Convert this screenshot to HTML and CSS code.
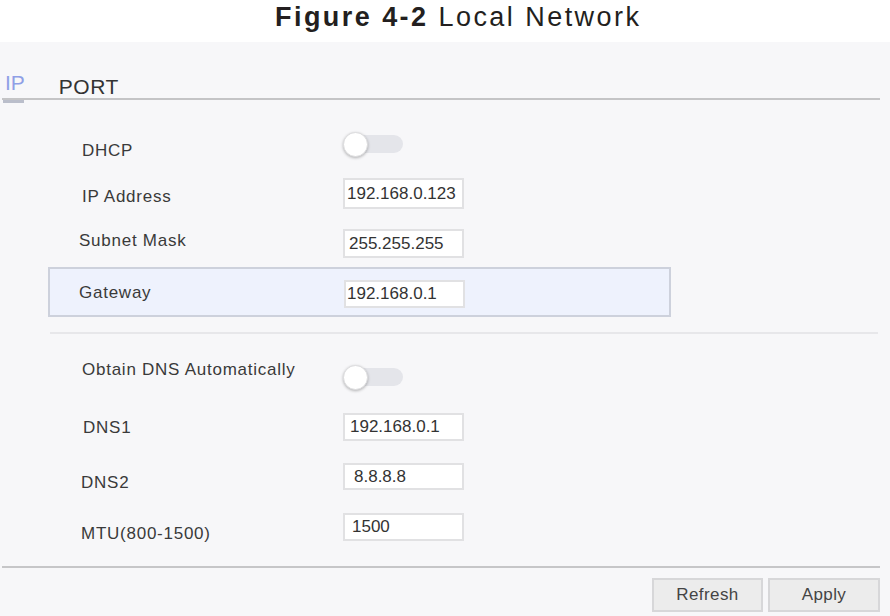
FILE: index.html
```html
<!DOCTYPE html>
<html lang="en">
<head>
<meta charset="utf-8">
<title>Local Network</title>
<link rel="stylesheet" href="styles.css">
</head>
<body>
<div class="page">
  <header class="title"><b>Figure 4-2</b> Local Network</header>
  <main class="panel">
    <nav class="tabs">
      <span class="tab tab-active">IP</span>
      <span class="tab tab-port">PORT</span>
    </nav>
    <section class="form">
      <div class="row r-dhcp">
        <span class="label">DHCP</span>
        <span class="toggle"><span class="knob"></span></span>
      </div>
      <div class="row r-ip">
        <span class="label">IP Address</span>
        <input class="field pad-ip" type="text" value="192.168.0.123">
      </div>
      <div class="row r-mask">
        <span class="label in-79">Subnet Mask</span>
        <input class="field pad-mask" type="text" value="255.255.255">
      </div>
      <div class="gateway">
        <span class="label">Gateway</span>
        <input class="field pad-gw" type="text" value="192.168.0.1">
      </div>
      <div class="sep"></div>
      <div class="row r-obtain">
        <span class="label">Obtain DNS Automatically</span>
        <span class="toggle"><span class="knob"></span></span>
      </div>
      <div class="row r-dns1">
        <span class="label in-83">DNS1</span>
        <input class="field pad-dns1" type="text" value="192.168.0.1">
      </div>
      <div class="row r-dns2">
        <span class="label in-81">DNS2</span>
        <input class="field pad-dns2" type="text" value="8.8.8.8">
      </div>
      <div class="row r-mtu">
        <span class="label in-81">MTU(800-1500)</span>
        <input class="field pad-mtu" type="text" value="1500">
      </div>
    </section>
    <div class="footer-line"></div>
    <div class="actions">
      <button class="btn btn-refresh" type="button">Refresh</button>
      <button class="btn btn-apply" type="button">Apply</button>
    </div>
  </main>
</div>
</body>
</html>
```
FILE: styles.css
```css
* { box-sizing: border-box; }
html, body { margin: 0; padding: 0; }
body {
  width: 890px;
  height: 616px;
  overflow: hidden;
  background: #f7f7f9;
  font-family: "Liberation Sans", Arial, sans-serif;
  color: #3a3a3a;
}
.page { display: flex; flex-direction: column; height: 616px; }

.title {
  height: 42px;
  background: #ffffff;
  padding-left: 275px;
  font-size: 27px;
  line-height: 34px;
  letter-spacing: 2.45px;
  color: #231f20;
  white-space: nowrap;
}
.title b { font-weight: 700; }

.panel { flex: 1; background: #f7f7f9; display: flex; flex-direction: column; }

.tabs {
  display: flex;
  align-items: flex-start;
  height: 58px;
  margin: 0 10px 0 2px;
  padding-left: 3px;
  border-bottom: 2px solid #c4c4c6;
}
.tab { font-size: 21px; line-height: 24px; }
.tab-active {
  position: relative;
  margin-top: 29px;
  color: #8f9fe6;
}
.tab-active::after {
  content: "";
  position: absolute;
  left: -2px;
  top: 29px;
  width: 21px;
  height: 3px;
  background: #babecb;
}
.tab-port { margin-top: 33px; margin-left: 34px; color: #333333; letter-spacing: 0.5px; }

.form { display: flex; flex-direction: column; }

.row {
  display: grid;
  grid-template-columns: 343px 121px;
  align-items: start;
}
.label {
  font-size: 17px;
  line-height: 20px;
  letter-spacing: 0.75px;
  padding-left: 82px;
  white-space: nowrap;
  color: #3a3a3a;
}
.in-79 { padding-left: 79px; }
.in-81 { padding-left: 81px; }
.in-83 { padding-left: 83px; }

.field {
  width: 121px;
  margin: 0;
  border: 2px solid #e1e1e3;
  background: #ffffff;
  font-family: "Liberation Sans", Arial, sans-serif;
  font-size: 17px;
  color: #333333;
  padding: 0 2px;
  outline: none;
}
.pad-ip { padding-left: 2px; }
.pad-mask { padding-left: 4px; }
.pad-gw { padding-left: 1px; }
.pad-dns1 { padding-left: 5px; }
.pad-dns2 { padding-left: 9px; }
.pad-mtu { padding-left: 7px; }

.toggle {
  display: flex;
  align-items: center;
  width: 58px;
  height: 18px;
  margin-left: 2px;
  border-radius: 9px;
  background: #e4e5ea;
}
.knob {
  flex: none;
  width: 25px;
  height: 25px;
  margin-left: -2px;
  border-radius: 50%;
  background: #ffffff;
  border: 1px solid #dcdcde;
  box-shadow: 0 1px 3px rgba(0, 0, 0, 0.28);
}

.r-dhcp { height: 64px; }
.r-dhcp .label { margin-top: 41px; }
.r-dhcp .toggle { margin-top: 35px; }

.r-ip { height: 52px; }
.r-ip .label { margin-top: 23px; }
.r-ip .field { margin-top: 14px; height: 31px; }

.r-mask { height: 46px; }
.r-mask .label { margin-top: 15px; }
.r-mask .field { margin-top: 13px; height: 29px; }

.gateway {
  display: grid;
  grid-template-columns: 294px 121px;
  align-items: start;
  margin: 5px 0 0 48px;
  width: 623px;
  height: 50px;
  border: 2px solid #cdd1dc;
  background: #eef2fd;
}
.gateway .label { padding-left: 29px; margin-top: 14px; }
.gateway .field { margin-top: 11px; height: 28px; }

.sep {
  height: 2px;
  margin: 15px 12px 0 50px;
  background: #e7e7ea;
}

.r-obtain { height: 61px; }
.r-obtain .label { margin-top: 26px; }
.r-obtain .toggle { margin-top: 34px; }

.r-dns1 { height: 51px; }
.r-dns1 .label { margin-top: 23px; }
.r-dns1 .field { margin-top: 18px; height: 28px; }

.r-dns2 { height: 50px; }
.r-dns2 .label { margin-top: 27px; }
.r-dns2 .field { margin-top: 17px; height: 27px; }

.r-mtu { height: 70px; }
.r-mtu .label { margin-top: 28px; }
.r-mtu .field { margin-top: 17px; height: 28px; }

.footer-line {
  height: 2px;
  margin: 0 10px 0 2px;
  background: #c6c6c8;
}

.actions {
  display: flex;
  justify-content: flex-end;
  gap: 5px;
  margin-top: 10px;
  padding-right: 10px;
}
.btn {
  height: 34px;
  margin: 0;
  border: 2px solid #d7d7d9;
  background: #ececec;
  font-family: "Liberation Sans", Arial, sans-serif;
  font-size: 17px;
  letter-spacing: 0.4px;
  color: #444444;
  padding: 0;
}
.btn-refresh { width: 111px; }
.btn-apply { width: 112px; }
```
